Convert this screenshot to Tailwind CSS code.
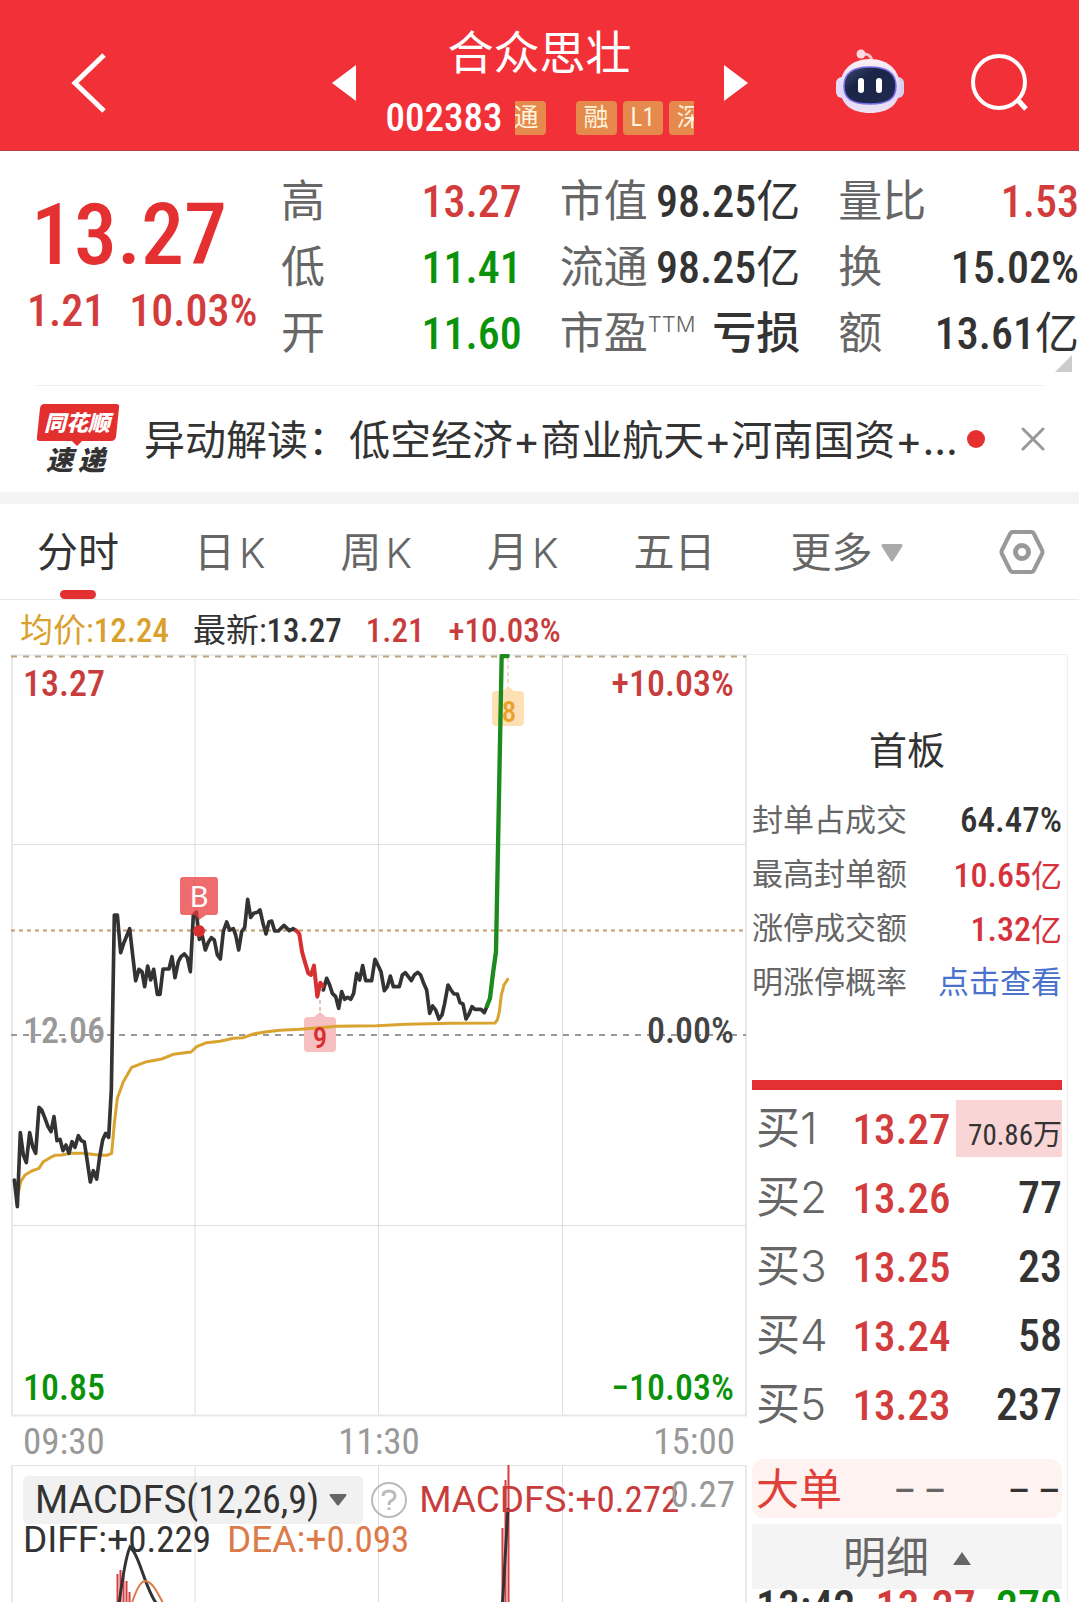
<!DOCTYPE html>
<html lang="zh-CN">
<head>
<meta charset="utf-8">
<meta name="viewport" content="width=device-width, initial-scale=1">
<title>合众思壮 002383</title>
<script src="https://cdn.jsdelivr.net/npm/@tailwindcss/browser@4"></script>
</head>
<body class="bg-white">
<div class="flex h-screen flex-col overflow-hidden font-['Roboto_Condensed','Liberation_Sans_Narrow',Roboto,'Noto_Sans_CJK_SC',sans-serif] text-[#333]">

  <header class="grid shrink-0 grid-cols-[1fr_auto_1fr] border-b border-[#b4424a] bg-[#f23038] pt-4 text-white">
    <div class="flex items-center pl-[71px]">
      <button type="button" aria-label="返回">
        <svg width="36" height="62" viewBox="0 0 36 62" fill="none" stroke="#fff" stroke-width="5"><path d="M33 3 4 31 33 59"/></svg>
      </button>
    </div>
    <div class="flex w-[416px] items-center justify-between">
      <button type="button" aria-label="上一只"><svg width="24" height="36" viewBox="0 0 24 36" fill="#fff"><path d="M0 18 24 0V36Z"/></svg></button>
      <div class="flex flex-col items-center pt-1 pb-[15px]">
        <h1 class="text-[46px] leading-[66px]">合众思壮</h1>
        <div class="mt-[15px] flex h-[34px] items-center gap-3">
          <span class="text-[39px] font-medium leading-[34px]">002383</span>
          <div class="flex w-[179px] gap-[6px] overflow-hidden text-[25px] leading-[34px] text-[#fff3dc]">
            <span class="-ml-2 mr-6 shrink-0 rounded bg-[#e58a4c] px-[7px]">通</span>
            <span class="shrink-0 rounded bg-[#e58a4c] px-2">融</span>
            <span class="shrink-0 rounded bg-[#e58a4c] px-2">L1</span>
            <span class="shrink-0 rounded bg-[#e58a4c] px-2">深</span>
          </div>
        </div>
      </div>
      <button type="button" aria-label="下一只"><svg width="24" height="36" viewBox="0 0 24 36" fill="#fff"><path d="M24 18 0 0V36Z"/></svg></button>
    </div>
    <div class="flex items-center gap-[65px] pl-[87px]">
      <button type="button" aria-label="智能助手" class="mb-1">
        <svg width="70" height="68" viewBox="0 0 70 68">
          <defs>
            <linearGradient id="shell" x1="0" y1="0" x2="0" y2="1"><stop offset="0" stop-color="#fff0f4"/><stop offset=".6" stop-color="#dcd6fb"/><stop offset="1" stop-color="#f0e2f0"/></linearGradient>
            <linearGradient id="face" x1="0" y1="0" x2="1" y2="1"><stop offset="0" stop-color="#3b4a72"/><stop offset=".35" stop-color="#1b2547"/><stop offset="1" stop-color="#202a50"/></linearGradient>
          </defs>
          <path d="M27 7Q37 6 37 16" fill="none" stroke="#fbc4cf" stroke-width="3"/>
          <circle cx="26" cy="7" r="4.500" fill="#ffdbe2"/>
          <rect x="1" y="30" width="12" height="21" rx="6" fill="#e6dcf8"/>
          <rect x="57" y="30" width="12" height="21" rx="6" fill="#d6cff2"/>
          <path d="M35 12C54 12 65 24 65 40 65 57 54 66 35 66 16 66 5 57 5 40 5 24 16 12 35 12Z" fill="url(#shell)"/>
          <path d="M35 20C53 20 61 27 61 39 61 52 53 57 35 57 17 57 9 52 9 39 9 27 17 20 35 20Z" fill="url(#face)" stroke="#7b6ee8" stroke-width="1.500"/>
          <rect x="23" y="31" width="6" height="15" rx="3" fill="#fff"/>
          <rect x="41" y="31" width="6" height="15" rx="3" fill="#fff"/>
        </svg>
      </button>
      <button type="button" aria-label="搜索">
        <svg width="60" height="60" viewBox="0 0 60 60" fill="none" stroke="#fff" stroke-width="4"><circle cx="29" cy="29" r="26"/><path d="M47 46 56 56" stroke-width="5"/></svg>
      </button>
    </div>
  </header>

  <section class="relative flex shrink-0 py-[18px]">
    <div class="w-[281px] shrink-0 font-medium text-[#e43030]">
      <p class="mt-[22px] pl-[31px] text-[86px] leading-[88px]">13.27</p>
      <p class="mt-2 flex gap-6 pl-[27px] text-[44px] leading-[48px] text-[#d23c3c]"><span>1.21</span><span>10.03%</span></p>
    </div>
    <div class="grid flex-1 grid-cols-3 gap-x-[38px] whitespace-nowrap text-[44px] leading-[66px]">
      <dl>
        <div class="flex justify-between"><dt class="text-[#666]">高</dt><dd class="font-medium text-[#d23c3c]">13.27</dd></div>
        <div class="flex justify-between"><dt class="text-[#666]">低</dt><dd class="font-medium text-[#0a930a]">11.41</dd></div>
        <div class="flex justify-between"><dt class="text-[#666]">开</dt><dd class="font-medium text-[#0a930a]">11.60</dd></div>
      </dl>
      <dl>
        <div class="flex justify-between"><dt class="text-[#666]">市值</dt><dd class="font-medium">98.25<span class="font-normal">亿</span></dd></div>
        <div class="flex justify-between"><dt class="text-[#666]">流通</dt><dd class="font-medium">98.25<span class="font-normal">亿</span></dd></div>
        <div class="flex justify-between"><dt class="flex text-[#666]">市盈<span class="font-[Inter] text-[22px] font-light leading-[46px]">TTM</span></dt><dd class="font-medium">亏损</dd></div>
      </dl>
      <dl>
        <div class="flex justify-between"><dt class="text-[#666]">量比</dt><dd class="font-medium text-[#d23c3c]">1.53</dd></div>
        <div class="flex justify-between"><dt class="text-[#666]">换</dt><dd class="font-medium">15.02%</dd></div>
        <div class="flex justify-between"><dt class="text-[#666]">额</dt><dd class="font-medium">13.61<span class="font-normal">亿</span></dd></div>
      </dl>
    </div>
    <svg class="absolute right-[7px] bottom-[13px]" width="17" height="17" viewBox="0 0 17 17" fill="#ccc"><path d="M17 0V17H0Z"/></svg>
  </section>

  <section class="ml-9 mr-[34px] flex h-[107px] shrink-0 items-center border-t border-[#f0f0f0]">
    <svg class="shrink-0" width="84" height="72" viewBox="0 0 84 72" role="img" aria-label="同花顺速递">
      <path d="M8 1H80Q84 1 83 5L80 34Q79 38 75 38H46L41 43 36 38H4Q0 38 1 34L4 5Q5 1 8 1Z" fill="#e3302f"/>
      <text x="8" y="28" font-size="22" font-weight="900" font-style="italic" fill="#fff">同花顺</text>
      <g font-size="27" font-weight="900" font-style="italic" fill="#333"><text x="10" y="67">速</text><text x="42" y="67">递</text></g>
    </svg>
    <a href="#news" class="ml-6 min-w-0 flex-1 truncate pt-0.5 font-[Inter,'Noto_Sans_CJK_SC',sans-serif] text-[41px] leading-[60px]">异动解读：低空经济+商业航天+河南国资+...</a>
    <span class="ml-2 size-[18px] shrink-0 rounded-full bg-[#e43030]"></span>
    <button type="button" aria-label="关闭" class="ml-9 shrink-0"><svg width="24" height="24" viewBox="0 0 24 24" stroke="#999" stroke-width="3" stroke-linecap="round"><path d="M2 2 22 22M22 2 2 22"/></svg></button>
  </section>

  <nav class="flex h-[108px] shrink-0 items-center gap-[75px] border-t-12 border-b border-t-[#f4f4f4] border-b-[#e8e8e8] pl-[37px] pr-[34px] text-[41px] leading-[60px] text-[#666]">
    <button type="button" class="relative flex h-full items-center pt-0.5 text-[#333]">分时<span class="absolute bottom-0 left-[23px] h-[9px] w-9 rounded-full bg-[#e43030]"></span></button>
    <button type="button" class="flex gap-1 pt-0.5">日<span class="font-[Inter] font-light">K</span></button>
    <button type="button" class="flex gap-1 pt-0.5">周<span class="font-[Inter] font-light">K</span></button>
    <button type="button" class="flex gap-1 pt-0.5">月<span class="font-[Inter] font-light">K</span></button>
    <button type="button" class="pt-0.5">五日</button>
    <button type="button" class="flex items-center gap-2 pt-0.5">更多<svg width="22" height="18" viewBox="0 0 22 18" fill="#aaa"><path d="M1 0H21Q22 1 21 3L12 17Q11 18 10 17L1 3Q0 1 1 0Z"/></svg></button>
    <button type="button" aria-label="设置" class="ml-auto"><svg width="46" height="44" viewBox="0 0 46 44" fill="none" stroke="#999" stroke-width="4" stroke-linejoin="round"><path d="M13 2H33Q34 2 35 4L43 20Q44 22 43 24L35 40Q34 42 33 42H13Q12 42 11 40L3 24Q2 22 3 20L11 4Q12 2 13 2Z"/><circle cx="23" cy="22" r="6.500" stroke-width="5"/></svg></button>
  </nav>

  <p class="flex h-[54px] shrink-0 items-center gap-6 pt-2 pl-5 text-[33px] leading-[46px]">
    <span class="text-[#daa02c]">均价:<b class="font-medium">12.24</b></span><span>最新:<b class="font-medium">13.27</b></span><span class="font-medium text-[#c83c3c]">1.21</span><span class="font-medium text-[#c83c3c]">+10.03%</span>
  </p>

  <main class="grid shrink-0 grid-cols-[736fr_321fr] px-[11px]">
    <div class="min-w-0">
      <svg class="block h-auto w-full" viewBox="11 654 736 763" fill="none" role="img" aria-label="分时走势">
        <path d="M11 655H747M11 844.500H747M11 1225.500H747M195 654V1416M378.500 654V1416M562.500 654V1416" stroke="#dedede"/>
        <path d="M12 655V1416M746 655V1416M11 1415.500H747" stroke="#e8e8e8" stroke-width="2"/>
        <path d="M11 656.500H746" stroke="#b9a480" stroke-width="2" stroke-dasharray="6 6"/>
        <path d="M11 930.500H746" stroke="#c09a6a" stroke-width="2" stroke-dasharray="4 4"/>
        <path d="M11 1035H746" stroke="#999" stroke-width="2" stroke-dasharray="6 6"/>
        <g font-size="36" font-weight="500">
          <text x="23" y="1043" fill="#999">12.06</text>
          <text x="734" y="1043" text-anchor="end" fill="#444">0.00%</text>
          <text x="23" y="696" fill="#c83c3c">13.27</text>
          <text x="734" y="696" text-anchor="end" fill="#c83c3c">+10.03%</text>
          <text x="23" y="1400" fill="#0a930a">10.85</text>
          <text x="734" y="1400" text-anchor="end" fill="#0a930a">−10.03%</text>
        </g>
        <path d="M496 691H503L508 686 514 691H520Q524 691 524 695V722Q524 726 520 726H496Q492 726 492 722V695Q492 691 496 691Z" fill="#fde0b4"/>
        <path d="M508 658V686" stroke="#d8b880" stroke-dasharray="4 3"/>
        <text x="509" y="722" text-anchor="middle" font-size="29" font-weight="500" fill="#eaa02c">8</text>
        <path d="M308 1017H314L320 1012 326 1017H332Q336 1017 336 1021V1048Q336 1052 332 1052H308Q304 1052 304 1048V1021Q304 1017 308 1017Z" fill="#f7bfc0"/>
        <g stroke-linejoin="round" stroke-linecap="round">
          <g transform="translate(0 860) scale(.33333)">
            <polyline stroke="#d9a32f" stroke-width="9" points="55,1000 62,965 75,945 95,933 117,925 130,905 150,893 165,886 185,885 210,880 250,880 270,882 300,886 320,886 335,880 343,790 352,715 370,665 395,622 440,605 485,597 520,583 573,576 590,560 620,548 660,544 700,535 730,533 760,522 800,515 840,511 900,508 960,503 1010,499 1130,497 1220,493 1350,490 1485,489 1492,480 1498,455 1504,405 1512,375 1523,358"/>
            <polyline stroke="#333" stroke-width="11" points="43,960 52,1040 61,818 70,885 79,908 89,818 98,860 107,880 117,742 125,750 135,775 144,800 153,815 162,770 171,842 180,838 189,872 198,855 207,880 216,845 225,862 235,827 244,842 253,846 262,905 271,966 280,932 290,957 299,890 308,840 317,820 326,832 334,690 343,165 352,165 362,278 371,250 380,228 389,206 398,285 407,362 417,328 426,335 434,380 443,318 452,360 461,328 472,403 480,403 489,327 507,327 516,290 525,353 535,305 543,290 553,282 562,293 571,335 580,165 589,156 598,238 607,228 616,270 625,247 634,233 643,240 652,285 661,297 670,215 680,186 689,210 700,206 707,225 716,270 725,215 734,203 743,118 752,172 761,160 772,157 780,150 789,190 798,222 807,185 815,183 824,213 835,213 852,196 868,212 880,206 889,212"/>
          </g>
          <g transform="translate(260 860) scale(.33333)">
            <polyline stroke="#333" stroke-width="11" points="190,390 200,355 209,375 217,400 227,410 236,445 245,395 254,418 263,412 272,418 281,400 290,340 299,360 308,317 317,362 335,362 345,298 355,318 363,335 373,392 382,380 391,348 400,380 418,380 427,345 436,338 445,350 454,362 463,345 473,337 482,345 491,370 500,390 509,460 518,438 527,450 537,477 546,465 554,430 564,375 573,390 582,402 592,402 600,428 609,432 618,477 627,462 636,440 645,448 663,448 673,458 681,438"/>
            <polyline stroke="#d63030" stroke-width="12" points="109,212 118,222 126,275 136,310 145,340 153,345 162,317 172,410 181,368 188,378"/>
            <polyline stroke="#1c8a1c" stroke-width="13" points="681,438 690,415 699,340 708,275 725,-612 743,-612"/>
          </g>
        </g>
        <path d="M320 1000V1012" stroke="#d08080" stroke-dasharray="4 3"/>
        <text x="320" y="1048" text-anchor="middle" font-size="29" font-weight="500" fill="#d63030">9</text>
        <path d="M183 877H215Q218 877 218 880V912Q218 915 215 915H206L199 920 195 915H183Q180 915 180 912V880Q180 877 183 877Z" fill="#e83a3e" fill-opacity=".75"/>
        <circle cx="199" cy="931" r="6" fill="#d63030"/>
        <text x="199" y="907" text-anchor="middle" font-family="Lato" font-size="29" fill="#fff">B</text>
      </svg>
      <div class="flex h-12 items-center justify-between px-3 pt-0.5 text-[37px] leading-[44px] text-[#999]"><span>09:30</span><span>11:30</span><span>15:00</span></div>
      <div class="relative">
        <svg class="block h-auto w-full" viewBox="11 1465 736 200" fill="none" role="img" aria-label="MACD 指标">
          <path d="M11 1465.500H747" stroke="#e4e4e4"/>
          <path d="M12 1465V1665M746 1465V1665" stroke="#e8e8e8" stroke-width="2"/>
          <rect x="23" y="1476" width="340" height="48" rx="5" fill="#f1f1f1"/>
          <path d="M195 1465V1665M378.500 1465V1665M562.500 1465V1665" stroke="#dedede"/>
          <path d="M117.500 1574V1665M120.500 1570V1665M123.500 1573V1665M126.500 1581V1665M129.500 1592V1665M502.500 1528V1665M505.500 1480V1665M508.500 1465V1665" stroke="#d63c40" stroke-width="2"/>
          <path d="M118 1612C122 1580 126 1556 130 1547L134 1552C142 1566 145 1586 156 1603L170 1640M502 1612 508 1508" stroke="#333" stroke-width="3"/>
          <path d="M130 1608C137 1588 140 1582 145 1581 153 1582 157 1592 163 1603L180 1640" stroke="#dd7a4a" stroke-width="2"/>
        </svg>
        <div class="absolute inset-x-0 top-0 text-[37px] leading-[44px]">
          <div class="flex items-center pt-[13px] pl-6">
            <button type="button" class="flex items-center text-[38px]"><span class="font-[Roboto]">MACDFS</span>(12,26,9)<svg class="ml-[10px]" width="18" height="12" viewBox="0 0 18 12" fill="#666"><path d="M1 0H17Q18 1 17 2L10 11Q9 12 8 11L1 2Q0 1 1 0Z"/></svg></button>
            <button type="button" aria-label="说明" class="ml-6"><svg width="36" height="36" viewBox="0 0 36 36" fill="none" stroke="#bbb" stroke-width="2"><circle cx="18" cy="18" r="17"/><path d="M12 14Q12 9 18 9 24 9 24 14 24 17 20 19 18 20 18 23M18 25.500V28" stroke-width="3"/></svg></button>
            <span class="ml-3 text-[#c83c3c]"><span class="font-[Roboto]">MACDFS:+</span>0.272</span>
          </div>
          <div class="flex gap-4 pl-3 leading-9"><span><span class="font-[Roboto]">DIFF:+</span>0.229</span><span class="text-[#dd7a4a]"><span class="font-[Roboto]">DEA:+</span>0.093</span></div>
          <span class="absolute top-2 right-3 text-[#999]">0.27</span>
        </div>
      </div>
    </div>

    <aside class="min-w-0 border-t border-r border-[#eee] px-[5px]">
      <h2 class="mt-[71px] text-center text-[38px] leading-[50px]">首板</h2>
      <dl class="mt-[18px] text-[31px] leading-[54px]">
        <div class="flex h-[54px] justify-between"><dt class="text-[#666]">封单占成交</dt><dd class="text-[35px] font-medium">64.47%</dd></div>
        <div class="flex h-[54px] justify-between"><dt class="text-[#666]">最高封单额</dt><dd class="text-[34px] font-medium text-[#d6323c]">10.65<span class="text-[31px] font-normal">亿</span></dd></div>
        <div class="flex h-[54px] justify-between"><dt class="text-[#666]">涨停成交额</dt><dd class="text-[34px] font-medium text-[#d6323c]">1.32<span class="text-[31px] font-normal">亿</span></dd></div>
        <div class="flex h-[54px] justify-between"><dt class="text-[#666]">明涨停概率</dt><dd><a href="#limit" class="text-[#4a72cc]">点击查看</a></dd></div>
      </dl>
      <div class="mt-[70px] h-[10px] bg-[#e43030]"></div>
      <table class="mt-1 w-full table-fixed whitespace-nowrap text-[44px] leading-[60px]">
        <colgroup><col class="w-[28%]"><col class="w-[36%]"><col class="w-[36%]"></colgroup>
        <tbody class="font-medium">
          <tr class="h-[69px]"><th class="pl-1 text-left font-normal text-[#666]">买<span class="font-[Inter] font-light">1</span></th><td class="text-right text-[43px] text-[#d23c3c]">13.27</td><td class="pl-[6px]"><div class="flex h-[57px] items-center justify-end bg-[#f9d5d6] pt-3 text-[29px] font-normal">70.86万</div></td></tr>
          <tr class="h-[69px]"><th class="pl-1 text-left font-normal text-[#666]">买<span class="font-[Inter] font-light">2</span></th><td class="text-right text-[43px] text-[#d23c3c]">13.26</td><td class="text-right">77</td></tr>
          <tr class="h-[69px]"><th class="pl-1 text-left font-normal text-[#666]">买<span class="font-[Inter] font-light">3</span></th><td class="text-right text-[43px] text-[#d23c3c]">13.25</td><td class="text-right">23</td></tr>
          <tr class="h-[69px]"><th class="pl-1 text-left font-normal text-[#666]">买<span class="font-[Inter] font-light">4</span></th><td class="text-right text-[43px] text-[#d23c3c]">13.24</td><td class="text-right">58</td></tr>
          <tr class="h-[69px]"><th class="pl-1 text-left font-normal text-[#666]">买<span class="font-[Inter] font-light">5</span></th><td class="text-right text-[43px] text-[#d23c3c]">13.23</td><td class="text-right">237</td></tr>
        </tbody>
      </table>
      <div class="mt-5 flex h-[59px] items-center rounded-xl bg-[#fff3f2] pt-1 pr-0.5 pl-1 text-[43px] text-[#e0403a]"><span class="flex-1">大单</span><span class="font-[Roboto] text-[34px] font-medium text-[#666]">– –</span><span class="ml-[62px] font-[Roboto] text-[34px] font-medium text-[#333]">– –</span></div>
      <button type="button" class="mt-[6px] flex h-[65px] w-full items-center justify-center gap-6 bg-[#f4f4f4] pt-1 text-[43px] leading-[61px] text-[#666]">明细<svg width="18" height="13" viewBox="0 0 18 13" fill="#666"><path d="M9 0 18 13H0Z"/></svg></button>
      <div class="flex justify-between pl-1 text-[44px] font-medium leading-9"><span>13:42</span><span class="text-[#d23c3c]">13.27</span><span class="text-[#0a930a]">270</span></div>
    </aside>
  </main>
</div>
</body>
</html>
